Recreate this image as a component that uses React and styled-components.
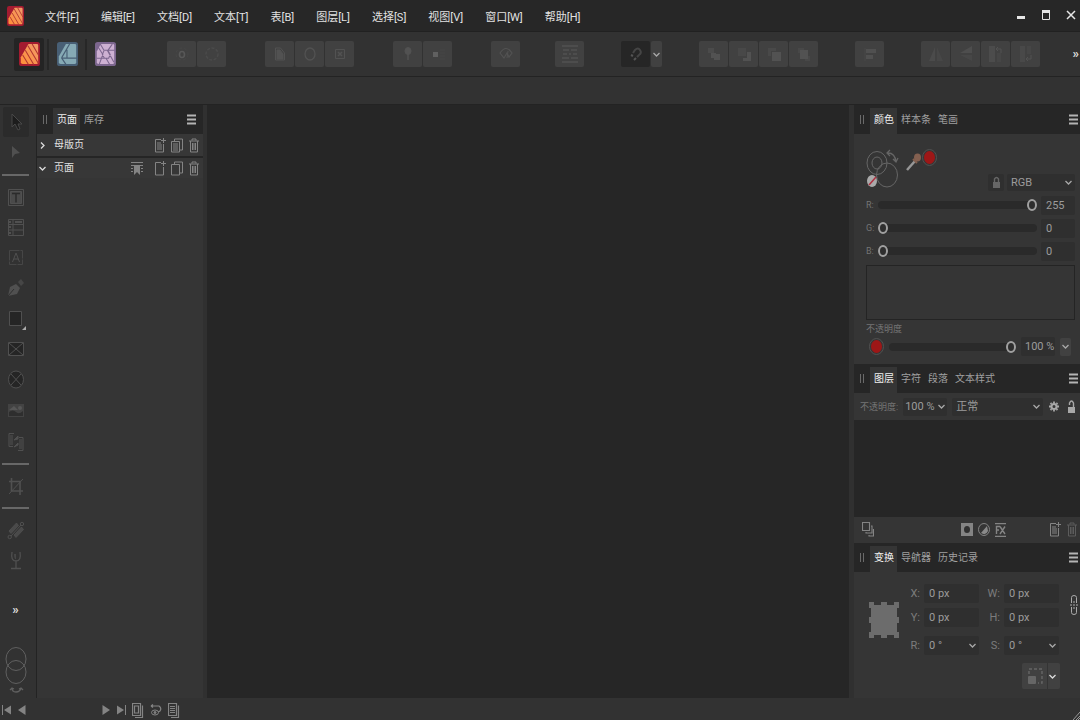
import styled, { createGlobalStyle, css } from 'styled-components'

const GlobalStyle = createGlobalStyle`
	* {
		box-sizing: border-box;
	}

	body {
		margin: 0;
		background: #262626;
		color: #a8a8a8;
		font: 11px/16px Roboto, "Noto Sans CJK SC", sans-serif;
	}

	button, input, select {
		margin: 0;
		padding: 0;
		border: 0;
		border-radius: 2px;
		background: none;
		color: inherit;
		font: inherit;
	}
`

const Page = styled.div`
	display: flex;
	flex-direction: column;
	min-height: 100vh;
	background: #323232;
`

const Icon = styled.svg`
	display: block;
	flex: none;
	fill: none;
	stroke: currentColor;
	stroke-width: ${p => p.$line || 1};
`

/* title bar */

const TitleBar = styled.header`
	display: flex;
	align-items: center;
	height: 32px;
	padding: 0 4px 0 7px;
	background: #272727;
	border-bottom: 1px solid #212121;
`

const Menu = styled.nav`
	display: flex;
	flex: 1;
	gap: 22px;
	margin-left: 21px;
	padding-top: 4px;
`

const MenuItem = styled.button`
	color: #e2e2e2;
	white-space: nowrap;
`

const WindowButtons = styled.div`
	display: flex;
	gap: 15px;
	margin-bottom: 2px;
	color: #e6e6e6;
`

/* toolbar */

const Toolbar = styled.div`
	display: flex;
	align-items: center;
	height: 45px;
	padding: 0 1px 0 14px;
	border-bottom: 1px solid #232323;
`

const Personas = styled.div`
	display: flex;
	flex: none;
	align-items: center;
	gap: 3px;
	width: 153px;
`

const Persona = styled.button`
	display: grid;
	place-items: center;
	width: 30px;
	height: 33px;
	background: ${p => (p.$active ? '#242424' : 'none')};
`

const PersonaLine = styled.span`
	width: 2px;
	height: 31px;
	background: #272727;
`

const ToolSection = styled.div`
	display: flex;
	flex: none;
	gap: ${p => p.$gap}px;
	margin-right: ${p => p.$after || 0}px;
`

const ToolGroup = styled.div`
	display: flex;
`

const BarButton = styled.button`
	display: grid;
	place-items: center;
	width: 29px;
	height: 26px;
	margin-right: 1px;
	background: ${p => (p.$pressed ? '#262626' : '#414141')};
	color: #525252;
`

const BarDrop = styled(BarButton)`
	width: 11px;
	height: ${p => p.$height || 26}px;
	color: #b0b0b0;
`

const More = styled.button`
	margin-left: auto;
	color: #dcdcdc;
	font-size: 13px;
	font-weight: 700;
`

const ContextBar = styled.div`
	height: 28px;
	border-bottom: 1px solid #232323;
`

/* main area */

const Main = styled.main`
	display: flex;
	flex: 1;
`

const Tools = styled.aside`
	display: flex;
	flex-direction: column;
	align-items: center;
	width: 37px;
	padding: 2px 5px 0 0;
	border-right: 1px solid #232323;
`

const Tool = styled.button`
	display: grid;
	place-items: center;
	width: 26px;
	height: ${p => (p.$tall ? 31 : 30)}px;
	background: ${p => (p.$active ? '#2b2b2b' : 'none')};
	color: #505050;
`

const ToolLine = styled.hr`
	width: 27px;
	height: 2px;
	margin: 6px 0;
	border: 0;
	background: #686868;
`

const ToolMore = styled.button`
	margin: 26px 0 29px;
	color: #dcdcdc;
	font-size: 13px;
	font-weight: 700;
`

const Side = styled.aside`
	display: flex;
	flex: none;
	flex-direction: column;
	width: ${p => p.$width}px;
	background: #353535;
	${p => (p.$right ? css`border-left: 5px solid #303030;` : css`border-right: 4px solid #303030;`)}
`

const Canvas = styled.section`
	flex: 1;
	background: #262626;
`

const PanelHead = styled.div`
	display: flex;
	align-items: flex-end;
	height: 29px;
	padding-left: 6px;
	background: #262626;
	color: #a0a0a0;
`

const Grip = styled.span`
	width: 4px;
	height: 9px;
	margin: 0 6px 10px 0;
	border: solid #6a6a6a;
	border-width: 0 1px;
`

const Tab = styled.button`
	height: 26px;
	padding: 0 3px 2px 4px;
	border-radius: 0;
	font-size: 10px;
	white-space: nowrap;
	${p => p.$active && css`
		background: #353535;
		color: #f0f0f0;
	`}
`

const PanelMenu = styled.button`
	margin: 0 ${p => p.$inset || 2}px 9px auto;
	color: #b4b4b4;
`

const SectionRow = styled.div`
	display: flex;
	align-items: center;
	gap: 5px;
	height: 22px;
	padding: 0 3px 0 2px;
	font-size: 10px;
	color: #e0e0e0;
	background: #373737;

	& + & {
		border-top: 2px solid #252525;
	}
`

const SectionName = styled.span`
	flex: 1;
	padding: 0 0 1px 3px;
`

const IconButton = styled.button`
	color: ${p => p.$color || '#848484'};
`

/* colour panel */

const ColorBody = styled.div`
	display: flex;
	flex-direction: column;
	height: 230px;
	padding: 15px 5px 0 12px;
`

const Wells = styled.div`
	display: flex;
	height: 25px;
	gap: 5px;
`

const ModeRow = styled.div`
	display: flex;
	justify-content: flex-end;
	gap: 3px;
	height: 17px;
	margin-bottom: 4px;
`

const LockButton = styled.button`
	display: grid;
	place-items: center;
	width: 16px;
	background: #2f2f2f;
	color: #666;
`

const SelectBox = styled.div`
	display: grid;
	flex: none;
	align-items: center;
	width: ${p => p.$width}px;
	height: ${p => p.$height || 18}px;
	border-radius: 2px;
	background: #2f2f2f;
	color: #9c9c9c;

	select, svg {
		grid-area: 1 / 1;
	}

	select {
		width: 100%;
		height: 100%;
		padding-left: ${p => p.$pad || 4}px;
		appearance: none;
	}

	svg {
		justify-self: end;
		margin-right: ${p => p.$end || 3}px;
		pointer-events: none;
	}
`

const SliderRow = styled.div`
	display: flex;
	align-items: center;
	height: 20px;
	margin-bottom: 3px;
`

const SliderLabel = styled.label`
	width: 12px;
	font-size: 9px;
	color: #747474;
`

const Slider = styled.input`
	flex: 1;
	min-width: 0;
	height: 8px;
	border-radius: 4px;
	background: #2a2a2a;
	appearance: none;

	&::-webkit-slider-thumb {
		width: 10px;
		height: 12px;
		border: 2px solid #a0a0a0;
		border-radius: 50%;
		background: #2e2e2e;
		appearance: none;
	}
`

const Field = styled.input`
	width: ${p => p.$width}px;
	height: 19px;
	margin-left: ${p => p.$gap || 0}px;
	padding-left: ${p => p.$pad || 5}px;
	background: #2f2f2f;
	color: #9c9c9c;
`

const Spectrum = styled.div`
	height: 55px;
	margin-top: 1px;
	border: 1px solid #242424;
`

const SmallLabel = styled.label`
	margin-top: 1px;
	font-size: 9px;
	color: #747474;
`

const OpacityRow = styled.div`
	display: flex;
	align-items: center;
	gap: 5px;
	padding: 0 3px;
`

/* layers panel */

const LayerOptions = styled.div`
	display: flex;
	align-items: center;
	gap: 5px;
	height: 27px;
	padding: 0 4px 0 6px;
	font-size: 9px;
	color: #747474;
	white-space: nowrap;

	label {
		flex: 1;
	}

	select {
		font-size: 11px;
	}
`

const LayerList = styled.div`
	height: 97px;
	background: #262626;
`

const LayerActions = styled.div`
	display: flex;
	align-items: center;
	gap: 5px;
	height: 26px;
	padding: 0 2px 1px 8px;
`

const Spacer = styled.span`
	flex: ${p => (p.$width ? `0 0 ${p.$width}px` : 1)};
`

/* transform panel */

const TransformBody = styled.div`
	display: flex;
	align-items: center;
	height: 96px;
	padding: 12px 2px 13px 14px;
`

const TransformFields = styled.div`
	display: grid;
	grid-template-columns: 24px 55px 25px 55px;
	row-gap: 5px;
	align-items: center;
	flex: 1;
	color: #7c7c7c;

	label {
		padding-right: 4px;
		text-align: right;
	}

	label:nth-of-type(n + 5), label:nth-of-type(n + 5) + div {
		margin-top: 4px;
	}
`

const Chain = styled.button`
	align-self: flex-start;
	margin-top: 11px;
	color: #aaa;
`

const ScaleRow = styled.div`
	display: flex;
	justify-content: flex-end;
	padding-right: 20px;
	margin-top: -5px;
`

const ScaleButton = styled.button`
	display: flex;
	align-items: center;
	gap: 6px;
	width: 38px;
	height: 26px;
	padding-left: 6px;
	background: linear-gradient(90deg, #414141 25px, #343434 25px, #343434 26px, #414141 26px);
	color: #666;
`

/* status bar */

const StatusBar = styled.footer`
	display: flex;
	align-items: center;
	gap: 6px;
	height: 22px;
	padding: 2px 0 0 2px;
`

/* icons */

function Chevron({ right, color = '#a8a8a8' }) {
	return (
		<Icon width="7" height="7" viewBox="0 0 7 7" $line={1.3} style={{ color }}>
			<path d={right ? 'M2 .5l3 3-3 3' : 'M.5 2l3 3 3-3'} />
		</Icon>
	)
}

function PublisherLogo({ width, height }) {
	return (
		<Icon width={width} height={height} viewBox="0 0 20 23" preserveAspectRatio="none">
			<defs>
				<linearGradient id="orange" x1="1" y1="0" x2="0" y2="1">
					<stop offset="0" stopColor="#f09a6c" />
					<stop offset="1" stopColor="#ff8f38" />
				</linearGradient>
			</defs>
			<rect width="20" height="23" rx="2.5" fill="#a31b30" stroke="none" />
			<path d="M9 2H17q1.300 0 1.300 1.300V19.700q0 1.300-1.300 1.300H3.500Q1.700 21 1.700 19.500V14.500z" fill="url(#orange)" stroke="none" />
			<path d="M12.500 2l6 10.500M8.500 3.500L18.500 20.500M6 8l8 13.500M3.500 12.500l5.500 9" stroke="#b0342f" strokeWidth="1" />
		</Icon>
	)
}

function DesignerLogo() {
	return (
		<Icon width="21" height="24" viewBox="0 0 20 23" preserveAspectRatio="none">
			<rect width="20" height="23" rx="2.500" fill="#485f75" stroke="none" />
			<path d="M8.500 2H17q1.300 0 1.300 1.300V19.700q0 1.300-1.300 1.300H3.500Q1.700 21 1.700 19.500V14z" fill="#86aab5" stroke="none" />
			<path d="M12 2L4.500 15M4.500 15.500L8.500 21.500M9.500 7.500V15.500M4 15.500h15" stroke="#485f75" strokeWidth="1.100" />
		</Icon>
	)
}

function PhotoLogo() {
	return (
		<Icon width="21" height="24" viewBox="0 0 20 23" preserveAspectRatio="none">
			<rect width="20" height="23" rx="2.500" fill="#7c668e" stroke="none" />
			<path d="M5.500 2H17q1.300 0 1.300 1.300V19.700q0 1.300-1.300 1.300H3.500Q1.700 21 1.700 19.500V9z" fill="#cdb0d2" stroke="none" />
			<path d="M5 2L8.500 8h10M16.500 2L12 8.500l6 11M14 21.500L10.500 15.500H1.700M4 21.500L7.500 12 2.500 4M8.500 8.500L7 12l2 3.500h4l1.500-3.500-2-3.500" stroke="#7c668e" strokeWidth="1" />
		</Icon>
	)
}

const barIcons = {
	gear: <><ellipse cx="8" cy="8.500" rx="2.500" ry="3" strokeWidth="1.600" stroke="#585858" /><circle cx="8" cy="8" r="6" stroke="#474747" strokeDasharray="3 2" /></>,
	cog: <circle cx="8" cy="8" r="6" stroke="#4b4b4b" strokeWidth="1.500" strokeDasharray="3 1.500" />,
	doc: <><path d="M3.500 2h5l4 5v7h-9z" /><path d="M5 4h3l3 4v5H5z" fill="currentColor" /></>,
	ring: <ellipse cx="8" cy="8" rx="5" ry="6" strokeWidth="1.300" />,
	boxX: <><path d="M3.500 3.500h9v9h-9z" /><path d="M6 6l4 4M10 6l-4 4" strokeWidth="1.600" /></>,
	pin: <><ellipse cx="8" cy="5" rx="3" ry="3.500" fill="currentColor" /><path d="M8 8v6" strokeWidth="1.500" /></>,
	inline: <><path d="M3 6h5v5H3z" fill="#606060" stroke="none" /><path d="M10 4h5M10 7h5M10 10h5M10 13h5" stroke="#464646" /></>,
	gauge: <><path d="M2 7q6-9 12 0l-3 4-2-4-3 5z" strokeWidth="1.200" /><path d="M9 12l1-7" /></>,
	lines: <path d="M0 0h16M0 16h16M1 4h6M9 4h6M1 8h4M7 8h2M11 8h4M0 12h7M9 12h7" strokeWidth="1.500" />,
	magnet: <><path d="M5 7l2-3q3-3 5 0t-1 5l-2 2" stroke="#454545" strokeWidth="2" /><path d="M3 9l2 1M6 14l2-2" stroke="#555" strokeWidth="2" /></>,
	back: <><path d="M2 2h6v5H2z" fill="#4b4b4b" stroke="none" /><path d="M8 8h6v6H8zM5 7h5v5H5z" fill="currentColor" stroke="none" /></>,
	down: <><path d="M2 2h8v8H2z" fill="#484848" stroke="none" /><path d="M11 6h4v9H7v-3h4z" fill="currentColor" stroke="none" /></>,
	up: <><path d="M2 2h8v3H5v5H2z" fill="#494949" stroke="none" /><path d="M6 6h9v9H6z" fill="currentColor" stroke="none" /></>,
	front: <><path d="M2 2h6v5H2zM9 10h5v5H9z" fill="#484848" stroke="none" /><path d="M4 4h8v9H4z" fill="currentColor" stroke="none" /></>,
	align: <><path d="M3 2v13" stroke="#484848" /><path d="M4 3h10v4H4zM4 9h7v4H4z" fill="#505050" stroke="none" /></>,
	flipH: <><path d="M7 1v14H1z" fill="#4b4b4b" stroke="none" /><path d="M9 1v14h6z" fill="#474747" stroke="none" /></>,
	flipV: <><path d="M14 0v7H2z" fill="#4e4e4e" stroke="none" /><path d="M14 15V9H2z" fill="#474747" stroke="none" /></>,
	rotL: <><path d="M1 0h6v16H1z" fill="#4c4c4c" stroke="none" /><path d="M9 7h4v9H9z" fill="#464646" stroke="none" /><path d="M9 3h4v4M10 1L8 3l2 2" /></>,
	rotR: <><path d="M2 0h5v16H2z" fill="#494949" stroke="none" /><path d="M9 0h4v8H9z" fill="#464646" stroke="none" /><path d="M9 13h4V9M10 11l-2 2 2 2" /></>,
}

function BarIcon({ name }) {
	return <Icon width="16" height="16" viewBox="0 0 16 16" overflow="visible">{barIcons[name]}</Icon>
}

const toolIcons = {
	move: <path d="M5 1v13l3-3 3 6 2-1-2-5h4z" fill="#1d1d1d" stroke="#484848" />,
	node: <path d="M5 3v12l3-4 5-1z" fill="currentColor" stroke="none" />,
	text: <><path d="M1.500 1.500h15v16h-15z" /><path d="M3.500 3.500h11v12h-11z" fill="#4a4a4a" /><path d="M5 5.500h8M9 5.500v9" stroke="#2b2b2b" strokeWidth="1.500" /></>,
	table: <><path d="M1.500 1.500h15v16h-15zM6 1v17M1 6.500h15M1 12h15" /><path d="M3 3v2M3 8v2M3 14v2" strokeWidth="2" /><path d="M8 4h7" strokeWidth="2" /></>,
	art: <><path d="M2.500 2.500h13v14h-13z" stroke="#464646" strokeDasharray="10 1" /><path d="M5.500 14L9 5l3.500 9M7 11h4" /></>,
	pen: <><path d="M1 18l2-9 6-3 4 4-3 6z" fill="currentColor" stroke="none" /><path d="M1 18l6-7" stroke="#303030" /><path d="M11 4l3-3 3 4-3 3z" fill="#464646" stroke="none" /></>,
	rect: <><path d="M2.500 3.500h12v14h-12z" fill="#252525" /><path d="M19 18v4h-4z" fill="#ababab" stroke="none" /></>,
	frame: <><path d="M1.500 3.500h15v13h-15z" fill="#252525" /><path d="M2 4l14 12M16 4L2 16" /></>,
	oval: <><ellipse cx="9" cy="9.500" rx="7.500" ry="8.500" fill="#252525" /><path d="M4 4l10 11M14 4L4 15" /></>,
	image: <><path d="M1 3h16v13H1z" fill="#434343" stroke="none" /><path d="M2 11q4-3 7 0t7-1v5H2z" fill="#2e2e2e" stroke="none" /><path d="M2 9l5-4 4 4z" fill="#575757" stroke="none" /><circle cx="13" cy="7" r="2" fill="#575757" stroke="none" /></>,
	data: <><path d="M7 1.500H2v13h4M3 4h3M3 6h3M3 8h3M3 10h3M3 12h3M12 5.500h4v13h-5M12 8h3M12 10h3M12 12h3M12 14h3M12 16h3" /><path d="M7 8l4-4v3zM7 15l4-4v2z" fill="currentColor" /></>,
	crop: <><path d="M4.500 1v13H16M2 4.500h11V18" strokeWidth="1.600" /><path d="M2 17L16 2" /></>,
	fill: <><circle cx="15" cy="3" r="1.700" /><circle cx="2.700" cy="16" r="1.700" /><path d="M4 15L14 4" /><path d="M2 10l7.500-8 2 2.500-7.500 8zM7 14l7.500-8 2 2.500-7.500 8z" fill="#4a4a4a" strokeWidth=".8" /></>,
	glass: <><path d="M5 1q-1.500 9 4 9t4-9M9 10v7M4 17.500h10" strokeWidth="1.300" /><path d="M7 3h2v5H8q-1-1-1-5z" fill="#474747" stroke="none" /></>,
}

function ToolButton({ name, label, tall, active }) {
	return (
		<Tool aria-label={label} $tall={tall} $active={active}>
			<Icon width="18" height="19" viewBox="0 0 18 19" overflow="visible">{toolIcons[name]}</Icon>
		</Tool>
	)
}

const smallIcons = {
	addMaster: <path d="M7 1.500H1.500v12.500h8V6M3 5h4M3 7h5M3 9h5M3 11h5M9.500 0v5M7 2.500h5" />,
	addPage: <path d="M7 1.500H1.500v12.500h8V6M9.500 0v5M7 2.500h5" />,
	copyMaster: <path d="M3.500 3V1h8v11H9M.5 3.500h8V14h-8zM2 6h5M2 8h5M2 10h5M2 12h5" />,
	copyPage: <path d="M3.500 3V1h8v11H9M.5 3.500h8V14h-8z" />,
	trash: <path d="M1 3h10M4 2.500V1h4v1.500M2.500 3v11h7V3M4.500 5v7M6 5v7M7.500 5v7" />,
	spread: <><path d="M0 1.500h12M0 4.500h12M0 7.500h2M10 7.500h2M0 10.500h2M10 10.500h2" /><path d="M3 5h6v9L6 11l-3 3z" fill="currentColor" stroke="none" /></>,
	pages: <path d="M.5.5h8v12h-8zM2.500 3h4v7h-4zM10.500 2.500v12H3" strokeWidth="1.200" />,
	layers: <path d="M.5.5h7v8h-7zM9 4h1v7H4v-1M11.500 7v7H7v-1" strokeWidth="1.100" />,
	mask: <><path d="M0 1h12v13H0z" fill="#848484" stroke="none" /><ellipse cx="6" cy="7.500" rx="3" ry="3.500" fill="#303030" stroke="none" /></>,
	adjust: <><ellipse cx="6" cy="7.500" rx="5.500" ry="6" /><path d="M9 4L3 11q5 3 7-2z" fill="#8a8a8a" stroke="none" /></>,
	preview: <><path d="M1 3l2-1.500M1 3l2 1.500M1 3h8q3 2 1 5l-2 1" strokeWidth="1.200" /><ellipse cx="5" cy="9.500" rx="3.500" ry="2.500" /><circle cx="5" cy="9.500" r="1" fill="currentColor" /></>,
	preflight: <path d="M.5.5h8v12h-8zM2 3.500h5M2 5.500h5M2 7.500h5M2 9.500h5M10.500 2.500v12H3" strokeWidth="1.200" />,
	gear: <><circle cx="6" cy="7.500" r="2.500" strokeWidth="2" /><path d="M6 2.500v2M6 10.500v2M1 7.500h2M9 7.500h2M2.500 4l1 1M8.500 10l1 1M9.500 4l-1 1M2.500 11l1-1" strokeWidth="1.800" /></>,
	lock: <><path d="M3 7h7v6H3z" fill="currentColor" stroke="none" /><path d="M4.500 7V4q2-3 4 0v3" strokeWidth="1.400" /></>,
	unlock: <><path d="M3 8h7v6H3z" fill="currentColor" stroke="none" /><path d="M4.500 6V4q2-4 4 0v4" strokeWidth="1.400" /></>,
}

function SmallIcon({ name, label, color }) {
	return (
		<IconButton aria-label={label} $color={color}>
			<Icon width="12" height="15" viewBox="0 0 12 15">{smallIcons[name]}</Icon>
		</IconButton>
	)
}

function Swatch({ label }) {
	return (
		<IconButton aria-label={label} $color="#515151">
			<Icon width="15" height="17" viewBox="0 0 15 17">
				<ellipse cx="7.500" cy="8.500" rx="7" ry="8" />
				<ellipse cx="7.500" cy="8.500" rx="5.500" ry="6.500" fill="#9d1717" stroke="none" />
			</Icon>
		</IconButton>
	)
}

function Head({ tabs, inset }) {
	return (
		<PanelHead>
			<Grip />
			{tabs.map((name, i) => <Tab key={name} $active={i === 0}>{name}</Tab>)}
			<PanelMenu aria-label="面板菜单" $inset={inset}>
				<Icon width="9" height="11" viewBox="0 0 9 11" $line={2}>
					<path d="M0 1.500h9M0 5.500h9M0 9.500h9" />
				</Icon>
			</PanelMenu>
		</PanelHead>
	)
}

function Select({ id, label, value, ...box }) {
	return (
		<SelectBox {...box}>
			<select id={id} aria-label={label}>
				<option>{value}</option>
			</select>
			<Chevron />
		</SelectBox>
	)
}

const menus = ['文件[F]', '编辑[E]', '文档[D]', '文本[T]', '表[B]', '图层[L]', '选择[S]', '视图[V]', '窗口[W]', '帮助[H]']

const leftGroups = [['gear', 'cog'], ['doc', 'ring', 'boxX'], ['pin', 'inline'], ['gauge']]
const rightGroups = [['back', 'down', 'up', 'front'], ['align'], ['flipH', 'flipV', 'rotL', 'rotR']]

const channels = [['R', 255], ['G', 0], ['B', 0]]

function BarGroup({ names }) {
	return (
		<ToolGroup>
			{names.map(name => (
				<BarButton key={name} aria-label={name}><BarIcon name={name} /></BarButton>
			))}
		</ToolGroup>
	)
}

function ColorPanel() {
	return (
		<>
			<Head tabs={['颜色', '样本条', '笔画']} />
			<ColorBody>
				<Wells>
					<Icon width="34" height="39" viewBox="0 0 34 39" style={{ color: '#666' }}>
						<ellipse cx="11" cy="14" rx="10" ry="11.500" />
						<ellipse cx="11" cy="14" rx="5" ry="6" />
						<ellipse cx="21" cy="26" rx="10.500" ry="12" />
						<ellipse cx="6" cy="32" rx="5" ry="6" fill="#aaa" stroke="none" />
						<path d="M3 36l7-8" stroke="#b03040" strokeWidth="1.500" />
						<path d="M22 4q7 0 8 9M24 1l-3 3 3 3M27 10l3 3 2-4" strokeWidth="1.300" />
					</Icon>
					<IconButton aria-label="拾色器">
						<Icon width="17" height="18" viewBox="0 0 17 18">
							<path d="M2 17L10 8" stroke="#969696" strokeWidth="2.500" />
							<path d="M8 6l4 4" stroke="#846050" strokeWidth="2" />
							<ellipse cx="12.500" cy="4.500" rx="3.500" ry="4" fill="#846050" stroke="none" />
						</Icon>
					</IconButton>
					<div style={{ marginLeft: -5 }}><Swatch label="当前颜色" /></div>
				</Wells>
				<ModeRow>
					<LockButton aria-label="锁定">
						<Icon width="12" height="15" viewBox="0 0 12 15">{smallIcons.lock}</Icon>
					</LockButton>
					<Select label="颜色模式" value="RGB" $width={68} $height={17} />
				</ModeRow>
				{channels.map(([name, value]) => (
					<SliderRow key={name}>
						<SliderLabel htmlFor={name}>{name}:</SliderLabel>
						<Slider id={name} type="range" min="0" max="255" defaultValue={value} />
						<Field aria-label={name + ' 值'} defaultValue={value} $width={34} $gap={4} />
					</SliderRow>
				))}
				<Spectrum />
				<SmallLabel htmlFor="opacity">不透明度</SmallLabel>
				<OpacityRow>
					<Swatch label="填充" />
					<Slider id="opacity" type="range" defaultValue="100" />
					<Field aria-label="不透明度值" defaultValue="100 %" $width={34} $pad={4} />
					<BarDrop aria-label="展开" $height={18}><Chevron /></BarDrop>
				</OpacityRow>
			</ColorBody>
		</>
	)
}

function LayersPanel() {
	return (
		<>
			<Head tabs={['图层', '字符', '段落', '文本样式']} />
			<LayerOptions>
				<label htmlFor="layer-opacity">不透明度:</label>
				<Select id="layer-opacity" value="100 %" $width={44} $pad={2} $end={2} />
				<Select label="混合模式" value="正常" $width={91} />
				<SmallIcon name="gear" label="混合选项" color="#a8a8a8" />
				<SmallIcon name="unlock" label="锁定图层" color="#a8a8a8" />
			</LayerOptions>
			<LayerList />
			<LayerActions>
				<SmallIcon name="layers" label="编辑所有图层" />
				<Spacer />
				<SmallIcon name="mask" label="蒙版" />
				<SmallIcon name="adjust" label="调整" />
				<IconButton aria-label="效果">
					<Icon width="11" height="14" viewBox="0 0 11 14">
						<path d="M0 .5h11M0 13.500h11M1.500 11V3.500H5M1.500 7H4M5 3.500l5 7.500M10 3.500L5 11" strokeWidth="1.400" />
					</Icon>
				</IconButton>
				<Spacer $width={33} />
				<SmallIcon name="addMaster" label="添加图层" />
				<SmallIcon name="trash" label="删除图层" color="#5c5c5c" />
			</LayerActions>
		</>
	)
}

function TransformPanel() {
	return (
		<>
			<Head tabs={['变换', '导航器', '历史记录']} />
			<TransformBody>
				<Icon width="32" height="36" viewBox="0 0 32 36" style={{ color: '#6c6c6c' }}>
					<path d="M3 3h26v30H3z" fill="currentColor" stroke="none" />
					<path d="M1 0h5v6H1zM13 0h6v6h-6zM26 0h5v6h-5zM1 15h5v6H1zM26 15h5v6h-5zM1 30h5v6H1zM13 30h6v6h-6zM26 30h5v6h-5z" fill="currentColor" stroke="none" />
				</Icon>
				<TransformFields>
					<label htmlFor="x">X:</label>
					<Field id="x" defaultValue="0 px" $width={55} />
					<label htmlFor="w">W:</label>
					<Field id="w" defaultValue="0 px" $width={55} />
					<label htmlFor="y">Y:</label>
					<Field id="y" defaultValue="0 px" $width={55} />
					<label htmlFor="h">H:</label>
					<Field id="h" defaultValue="0 px" $width={55} />
					<label htmlFor="r">R:</label>
					<Select id="r" value="0 °" $width={55} $height={19} $pad={5} />
					<label htmlFor="s">S:</label>
					<Select id="s" value="0 °" $width={55} $height={19} $pad={5} />
				</TransformFields>
				<Chain aria-label="锁定比例">
					<Icon width="8" height="20" viewBox="0 0 8 20">
						<path d="M1.500 8V2.500q0-2 2.500-2t2.500 2V8M1.500 12v5.500q0 2 2.500 2t2.500-2V12M0 10h2M3 10h2M6 10h2M4 6v2M4 12v2" />
					</Icon>
				</Chain>
			</TransformBody>
			<ScaleRow>
				<ScaleButton aria-label="缩放方式">
					<Icon width="15" height="16" viewBox="0 0 15 16">
						<rect y="8" width="8" height="8" rx="1" fill="currentColor" stroke="none" />
						<path d="M1 6V1h13v14h-4" strokeDasharray="3 2" strokeWidth="1.400" />
					</Icon>
					<Chevron color="#dcdcdc" />
				</ScaleButton>
			</ScaleRow>
		</>
	)
}

function App() {
	return (
		<Page>
			<GlobalStyle />
			<TitleBar>
				<PublisherLogo width={17} height={20} />
				<Menu>
					{menus.map(name => <MenuItem key={name}>{name}</MenuItem>)}
				</Menu>
				<WindowButtons>
					<IconButton aria-label="最小化" $color="#e6e6e6">
						<Icon width="10" height="10" viewBox="0 0 10 10"><path d="M1 7.500h8" strokeWidth="3" /></Icon>
					</IconButton>
					<IconButton aria-label="最大化" $color="#e6e6e6">
						<Icon width="10" height="10" viewBox="0 0 10 10"><path d="M1.500 1v8.500h7V1" /><path d="M1 1.500h8" strokeWidth="3" /></Icon>
					</IconButton>
					<IconButton aria-label="关闭" $color="#e6e6e6">
						<Icon width="10" height="10" viewBox="0 0 10 10" $line={1.5}><path d="M1 1l8 8M9 1L1 9" /></Icon>
					</IconButton>
				</WindowButtons>
			</TitleBar>

			<Toolbar>
				<Personas>
					<Persona aria-label="Publisher" $active><PublisherLogo width={21} height={24} /></Persona>
					<PersonaLine />
					<Persona aria-label="Designer"><DesignerLogo /></Persona>
					<PersonaLine />
					<Persona aria-label="Photo"><PhotoLogo /></Persona>
				</Personas>
				<ToolSection $gap={38} $after={34}>
					{leftGroups.map(names => <BarGroup key={names[0]} names={names} />)}
				</ToolSection>
				<ToolSection $gap={36}>
					<BarGroup names={['lines']} />
					<ToolGroup>
						<BarButton aria-label="吸附" $pressed><BarIcon name="magnet" /></BarButton>
						<BarDrop aria-label="吸附选项"><Chevron /></BarDrop>
					</ToolGroup>
					{rightGroups.map(names => <BarGroup key={names[0]} names={names} />)}
				</ToolSection>
				<More aria-label="更多">»</More>
			</Toolbar>
			<ContextBar />

			<Main>
				<Tools>
					<ToolButton name="move" label="移动工具" active />
					<ToolButton name="node" label="节点工具" tall />
					<ToolLine />
					<ToolButton name="text" label="文本框工具" />
					<ToolButton name="table" label="表工具" />
					<ToolButton name="art" label="美术字工具" />
					<ToolButton name="pen" label="钢笔工具" />
					<ToolButton name="rect" label="矩形工具" tall />
					<ToolButton name="frame" label="图框工具" tall />
					<ToolButton name="oval" label="椭圆图框工具" tall />
					<ToolButton name="image" label="置入图像" tall />
					<ToolButton name="data" label="数据合并" tall />
					<ToolLine />
					<ToolButton name="crop" label="裁剪工具" />
					<ToolLine />
					<ToolButton name="fill" label="填充工具" />
					<ToolButton name="glass" label="透明度工具" tall />
					<ToolMore aria-label="更多工具">»</ToolMore>
					<Icon width="22" height="48" viewBox="0 0 22 48" style={{ color: '#606060' }}>
						<ellipse cx="11" cy="12" rx="10" ry="11.500" />
						<ellipse cx="11" cy="25" rx="10" ry="11.500" />
						<path d="M7 41q0 4 4 4t5-4M5 43l2-2 2 1M14 42l2-1 2 2" strokeWidth="1.300" />
					</Icon>
				</Tools>

				<Side $width={170}>
					<Head tabs={['页面', '库存']} inset={7} />
					<SectionRow>
						<Chevron right color="#dcdcdc" />
						<SectionName>母版页</SectionName>
						<SmallIcon name="addMaster" label="添加母版" />
						<SmallIcon name="copyMaster" label="复制母版" />
						<SmallIcon name="trash" label="删除母版" />
					</SectionRow>
					<SectionRow>
						<Chevron color="#dcdcdc" />
						<SectionName>页面</SectionName>
						<SmallIcon name="spread" label="跨页属性" />
						<Spacer $width={1} />
						<SmallIcon name="addPage" label="添加页面" />
						<SmallIcon name="copyPage" label="复制页面" />
						<SmallIcon name="trash" label="删除页面" />
					</SectionRow>
				</Side>

				<Canvas />

				<Side $width={231} $right>
					<ColorPanel />
					<LayersPanel />
					<TransformPanel />
				</Side>
			</Main>

			<StatusBar>
				<IconButton aria-label="首页">
					<Icon width="10" height="10" viewBox="0 0 10 10"><path d="M.5 0v10" /><path d="M9 .5v9L2 5z" fill="currentColor" stroke="none" /></Icon>
				</IconButton>
				<IconButton aria-label="上一页">
					<Icon width="8" height="10" viewBox="0 0 8 10"><path d="M7.500 0v10L0 5z" fill="currentColor" stroke="none" /></Icon>
				</IconButton>
				<Spacer $width={64} />
				<IconButton aria-label="下一页">
					<Icon width="8" height="10" viewBox="0 0 8 10"><path d="M.5 0v10L8 5z" fill="currentColor" stroke="none" /></Icon>
				</IconButton>
				<IconButton aria-label="末页">
					<Icon width="10" height="10" viewBox="0 0 10 10"><path d="M9.500 0v10" /><path d="M1 .5v9L8 5z" fill="currentColor" stroke="none" /></Icon>
				</IconButton>
				<SmallIcon name="pages" label="页面列表" />
				<SmallIcon name="preview" label="预览模式" />
				<SmallIcon name="preflight" label="印前检查" />
				<Spacer />
				<Icon width="7" height="9" viewBox="0 0 7 9" style={{ color: '#999', alignSelf: 'flex-end' }}>
					<path d="M0 9l7-8M3 9l4-4M5 9l2-2" />
				</Icon>
			</StatusBar>
		</Page>
	)
}

export default App
